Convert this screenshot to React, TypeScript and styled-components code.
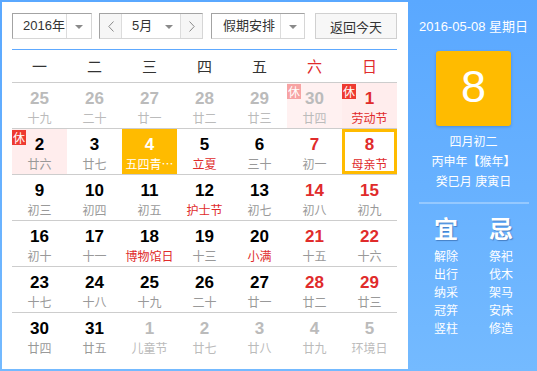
import React from 'react'
import styled, {createGlobalStyle, css} from 'styled-components'

const GlobalStyle = createGlobalStyle`
  html, body {
    margin: 0;
    padding: 0;
    background: #fff;
  }
  body {
    font-family: "Liberation Sans", "Noto Sans CJK SC", sans-serif;
  }
`

const Root = styled.div`
  display: flex;
  width: 537px;
  height: 371px;
  background: linear-gradient(180deg, #5aa8ff 0%, #74baff 100%);
`

const Main = styled.div`
  width: 406px;
  margin: 2px 0 2px 2px;
  padding: 11px 11px 0 10px;
  box-sizing: border-box;
  background: #fff;
`

const Toolbar = styled.div`
  display: flex;
  height: 26px;
  margin-bottom: 10px;
`

const Box = styled.div<{$width: number; $gap?: number}>`
  display: flex;
  width: ${({$width}) => $width}px;
  margin-left: ${({$gap}) => $gap || 0}px;
  height: 26px;
  box-sizing: border-box;
  border: 1px solid;
  border-color: #a3a3a3 #d6d6d6 #d6d6d6 #a3a3a3;
  background: #fff;
  font-family: "Liberation Sans", "Noto Sans CJK SC", sans-serif;
  font-size: 13px;
  color: #333;
`

const SelectText = styled.span<{$pad: number}>`
  flex: 1;
  padding-left: ${({$pad}) => $pad}px;
  line-height: 24px;
`

const SelectArrow = styled.span<{$width: number; $plain?: boolean}>`
  width: ${({$width}) => $width}px;
  border-left: ${({$plain}) => ($plain ? 'none' : '1px solid #dcdcdc')};
  display: flex;
  align-items: center;
  justify-content: center;

  &::after {
    content: '';
    border-left: 4px solid transparent;
    border-right: 4px solid transparent;
    border-top: 4px solid #8a8a8a;
    margin-top: 1px;
  }
`

const NavButton = styled.span<{$side: 'left' | 'right'}>`
  width: 21px;
  display: flex;
  align-items: center;
  justify-content: center;
  background: #f6f6f6;
  ${({$side}) =>
    $side === 'left'
      ? css`
          border-right: 1px solid #dcdcdc;
        `
      : css`
          border-left: 1px solid #dcdcdc;
        `}
`

const TodayButton = styled.button`
  margin-left: 10px;
  width: 82px;
  height: 26px;
  padding: 0;
  box-sizing: border-box;
  border: 1px solid #d0d0d0;
  background: #f7f7f7;
  font-family: "Liberation Sans", "Noto Sans CJK SC", sans-serif;
  font-size: 13px;
  color: #333;
`

const WeekHeader = styled.div`
  display: grid;
  grid-template-columns: repeat(7, 55px);
  height: 32px;
  border-top: 1px solid #5ea9ff;
  border-bottom: 1px solid #cdcdcd;
`

const WeekDay = styled.div<{$weekend?: boolean}>`
  text-align: center;
  line-height: 32px;
  font-family: "Noto Sans CJK SC", sans-serif;
  font-size: 15px;
  color: ${({$weekend}) => ($weekend ? '#e02b2b' : '#333')};
`

const Row = styled.div`
  display: grid;
  grid-template-columns: repeat(7, 55px);
  border-bottom: 1px solid #cdcdcd;

  &:last-child {
    border-bottom: none;
  }
`

type Tone = 'plain' | 'rest' | 'restOut' | 'today'

const cellBg: Record<Tone, string> = {
  plain: 'transparent',
  rest: '#ffeded',
  restOut: '#fff1f1',
  today: '#ffbb00',
}

const Cell = styled.div<{$tone: Tone; $selected?: boolean}>`
  position: relative;
  height: 45px;
  padding-top: 6px;
  box-sizing: border-box;
  text-align: center;
  background: ${({$tone}) => cellBg[$tone]};
  ${({$selected}) =>
    $selected &&
    css`
      box-shadow: inset 0 0 0 3px #ffbb00;
    `}
`

const DayNum = styled.div<{$color: string}>`
  font-family: "Liberation Sans", Arial, sans-serif;
  font-weight: bold;
  font-size: 17px;
  line-height: 20px;
  color: ${({$color}) => $color};
`

const Lunar = styled.div<{$color: string}>`
  font-family: "Noto Sans CJK SC", sans-serif;
  font-size: 12px;
  line-height: 18px;
  color: ${({$color}) => $color};
  white-space: nowrap;
`

const RestBadge = styled.span<{$faded?: boolean}>`
  position: absolute;
  top: 1px;
  left: 0;
  width: 14px;
  height: 15px;
  background: ${({$faded}) => ($faded ? '#f7a3a3' : '#ee3a30')};
  color: #fff;
  font-family: "Noto Sans CJK SC", sans-serif;
  font-size: 12px;
  line-height: 15px;
  text-align: center;
`

const Side = styled.div`
  flex: 1;
  display: flex;
  flex-direction: column;
  align-items: center;
  padding: 18px 0 0 2px;
  color: #fff;
  font-family: "Liberation Sans", "Noto Sans CJK SC", sans-serif;
`

const SideDate = styled.div`
  font-size: 13px;
  line-height: 18px;
`

const DayBox = styled.div`
  margin-top: 15px;
  width: 75px;
  height: 75px;
  border-radius: 3px;
  background: #ffbb00;
  box-shadow: 0 1px 3px rgba(0, 40, 120, 0.25);
  display: flex;
  align-items: center;
  justify-content: center;
  font-size: 45px;
  line-height: 1;
  padding-bottom: 4px;
  box-sizing: border-box;
`

const SideInfo = styled.div`
  margin-top: 6px;
  text-align: center;
  font-size: 12px;
  line-height: 20px;
`

const Divider = styled.div`
  margin-top: 10px;
  width: 110px;
  height: 2px;
  background: rgba(255, 255, 255, 0.3);
`

const YiJi = styled.div`
  margin-top: 9px;
  display: grid;
  grid-template-columns: 55px 55px;
  text-align: center;
`

const YiJiHead = styled.div`
  font-family: "Noto Sans CJK SC", sans-serif;
  font-weight: bold;
  font-size: 24px;
  line-height: 30px;
  text-shadow: 1px 1px 1px rgba(0, 30, 90, 0.35);
`

const YiJiList = styled.div`
  margin-top: 4px;
  font-family: "Noto Sans CJK SC", sans-serif;
  font-size: 12px;
  line-height: 18px;
`

const Chevron = ({dir}: {dir: 'left' | 'right'}) => (
  <svg width="6" height="11" viewBox="0 0 6 11">
    <polyline
      points={dir === 'left' ? '5.5,0.5 0.8,5.5 5.5,10.5' : '0.5,0.5 5.2,5.5 0.5,10.5'}
      fill="none"
      stroke="#8a8a8a"
      strokeWidth="1"
    />
  </svg>
)

type Day = {
  n: number
  l: string
  out?: boolean
  red?: boolean
  fest?: boolean
  tone?: Tone
  rest?: boolean
  selected?: boolean
}

const weeks: Day[][] = [
  [
    {n: 25, l: '十九', out: true},
    {n: 26, l: '二十', out: true},
    {n: 27, l: '廿一', out: true},
    {n: 28, l: '廿二', out: true},
    {n: 29, l: '廿三', out: true},
    {n: 30, l: '廿四', out: true, tone: 'restOut', rest: true},
    {n: 1, l: '劳动节', red: true, fest: true, tone: 'rest', rest: true},
  ],
  [
    {n: 2, l: '廿六', tone: 'rest', rest: true},
    {n: 3, l: '廿七'},
    {n: 4, l: '五四青…', tone: 'today'},
    {n: 5, l: '立夏', fest: true},
    {n: 6, l: '三十'},
    {n: 7, l: '初一', red: true},
    {n: 8, l: '母亲节', red: true, fest: true, selected: true},
  ],
  [
    {n: 9, l: '初三'},
    {n: 10, l: '初四'},
    {n: 11, l: '初五'},
    {n: 12, l: '护士节', fest: true},
    {n: 13, l: '初七'},
    {n: 14, l: '初八', red: true},
    {n: 15, l: '初九', red: true},
  ],
  [
    {n: 16, l: '初十'},
    {n: 17, l: '十一'},
    {n: 18, l: '博物馆日', fest: true},
    {n: 19, l: '十三'},
    {n: 20, l: '小满', fest: true},
    {n: 21, l: '十五', red: true},
    {n: 22, l: '十六', red: true},
  ],
  [
    {n: 23, l: '十七'},
    {n: 24, l: '十八'},
    {n: 25, l: '十九'},
    {n: 26, l: '二十'},
    {n: 27, l: '廿一'},
    {n: 28, l: '廿二', red: true},
    {n: 29, l: '廿三', red: true},
  ],
  [
    {n: 30, l: '廿四'},
    {n: 31, l: '廿五'},
    {n: 1, l: '儿童节', out: true},
    {n: 2, l: '廿七', out: true},
    {n: 3, l: '廿八', out: true},
    {n: 4, l: '廿九', out: true},
    {n: 5, l: '环境日', out: true},
  ],
]

const RED = '#e02b2b'

const numColor = (d: Day) => {
  if (d.tone === 'today') return '#fff'
  if (d.out) return '#bbb'
  return d.red ? RED : '#000'
}

const lunarColor = (d: Day) => {
  if (d.tone === 'today') return '#fff'
  if (d.out) return '#bbb'
  return d.fest ? RED : '#999'
}

const good = ['解除', '出行', '纳采', '冠笄', '竖柱']
const bad = ['祭祀', '伐木', '架马', '安床', '修造']

export default function App() {
  return (
    <Root>
      <GlobalStyle />
      <Main>
        <Toolbar>
          <Box $width={80}>
            <SelectText $pad={10}>2016年</SelectText>
            <SelectArrow $width={24} />
          </Box>
          <Box $width={104} $gap={7}>
            <NavButton $side="left">
              <Chevron dir="left" />
            </NavButton>
            <SelectText $pad={10}>5月</SelectText>
            <SelectArrow $width={22} $plain />
            <NavButton $side="right">
              <Chevron dir="right" />
            </NavButton>
          </Box>
          <Box $width={94} $gap={8}>
            <SelectText $pad={11}>假期安排</SelectText>
            <SelectArrow $width={23} />
          </Box>
          <TodayButton>返回今天</TodayButton>
        </Toolbar>
        <WeekHeader>
          {['一', '二', '三', '四', '五', '六', '日'].map((w, i) => (
            <WeekDay key={w} $weekend={i > 4}>
              {w}
            </WeekDay>
          ))}
        </WeekHeader>
        {weeks.map((week, wi) => (
          <Row key={wi}>
            {week.map((d, di) => (
              <Cell key={di} $tone={d.tone || 'plain'} $selected={d.selected}>
                {d.rest && <RestBadge $faded={d.out}>休</RestBadge>}
                <DayNum $color={numColor(d)}>{d.n}</DayNum>
                <Lunar $color={lunarColor(d)}>{d.l}</Lunar>
              </Cell>
            ))}
          </Row>
        ))}
      </Main>
      <Side>
        <SideDate>2016-05-08 星期日</SideDate>
        <DayBox>8</DayBox>
        <SideInfo>
          <div>四月初二</div>
          <div>丙申年【猴年】</div>
          <div>癸巳月 庚寅日</div>
        </SideInfo>
        <Divider />
        <YiJi>
          <YiJiHead>宜</YiJiHead>
          <YiJiHead>忌</YiJiHead>
          <YiJiList>
            {good.map((g) => (
              <div key={g}>{g}</div>
            ))}
          </YiJiList>
          <YiJiList>
            {bad.map((b) => (
              <div key={b}>{b}</div>
            ))}
          </YiJiList>
        </YiJi>
      </Side>
    </Root>
  )
}
